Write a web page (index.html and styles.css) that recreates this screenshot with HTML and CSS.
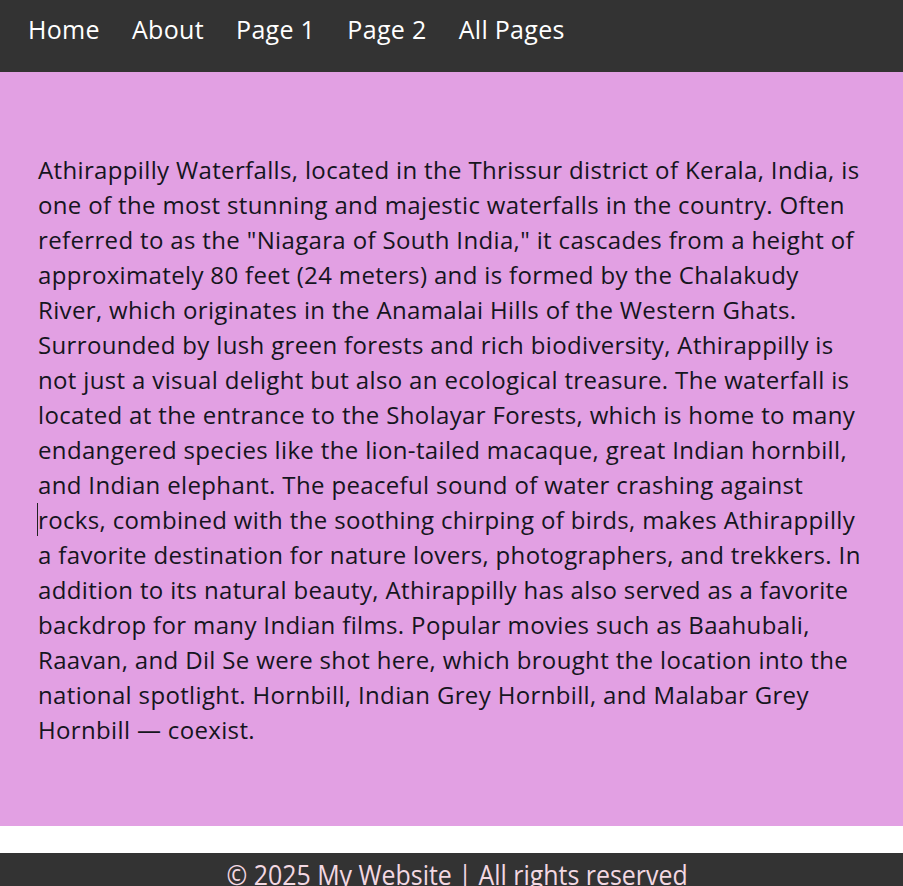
FILE: index.html
```html
<!DOCTYPE html>
<html lang="en">
<head>
<meta charset="utf-8">
<title>Athirappilly Waterfalls</title>
<link rel="stylesheet" href="styles.css">
</head>
<body>
<nav class="nav">
  <a class="nav-link" href="#">Home</a>
  <a class="nav-link" href="#">About</a>
  <a class="nav-link" href="#">Page 1</a>
  <a class="nav-link" href="#">Page 2</a>
  <a class="nav-link" href="#">All Pages</a>
</nav>
<main class="content">
  <p class="text">Athirappilly Waterfalls, located in the Thrissur district of Kerala, India, is one of the most stunning and majestic waterfalls in the country. Often referred to as the "Niagara of South India," it cascades from a height of approximately 80 feet (24 meters) and is formed by the Chalakudy River, which originates in the Anamalai Hills of the Western Ghats. Surrounded by lush green forests and rich biodiversity, Athirappilly is not just a visual delight but also an ecological treasure. The waterfall is located at the entrance to the Sholayar Forests, which is home to many endangered species like the lion-tailed macaque, great Indian hornbill, and Indian elephant. The peaceful sound of water crashing against <span class="caret">rocks,</span> combined with the soothing chirping of birds, makes Athirappilly a favorite destination for nature lovers, photographers, and trekkers. In addition to its natural beauty, Athirappilly has also served as a favorite backdrop for many Indian films. Popular movies such as Baahubali, Raavan, and Dil Se were shot here, which brought the location into the national spotlight. Hornbill, Indian Grey Hornbill, and Malabar Grey Hornbill — coexist.</p>
</main>
<footer class="footer"><span class="footer-text">© 2025 My Website | All rights reserved</span></footer>
</body>
</html>
```
FILE: styles.css
```css
* { box-sizing: border-box; }
html, body { margin: 0; padding: 0; }
body {
  font-family: "Open Sans", "Noto Sans", sans-serif;
  background: #ffffff;
}
.nav {
  background: #333333;
  height: 72px;
  padding: 0 14px;
}
.nav-link {
  display: inline-block;
  color: #ffffff;
  text-decoration: none;
  font-size: 25px;
  letter-spacing: 0.3px;
  line-height: 32px;
  padding: 13px 14px;
}
.content {
  background: #e2a0e3;
  padding: 80px 36px 79px 38px;
}
.text {
  margin: 0;
  font-size: 24px;
  letter-spacing: 0.35px;
  line-height: 35px;
  color: #151520;
}
.caret {
  border-left: 1px solid #222;
  margin-left: -1px;
}
.footer {
  margin-top: 27px;
  background: #333333;
  color: #f3d8e2;
  text-align: center;
  font-size: 28px;
  padding: 2px 0 10px 12px;
}
.footer-text {
  display: inline-block;
  transform: scaleX(0.89);
}
```
